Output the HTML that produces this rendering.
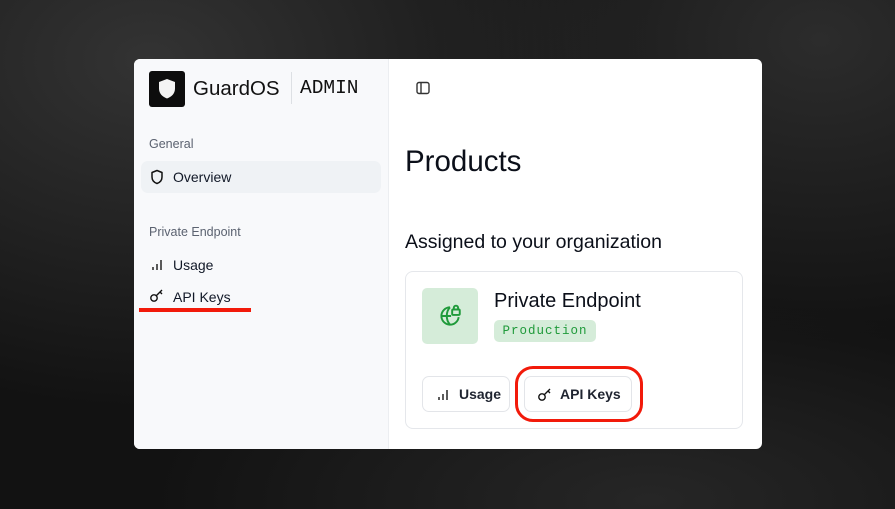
<!DOCTYPE html>
<html><head><style>
*{box-sizing:border-box;margin:0;padding:0}
body{width:895px;height:509px;overflow:hidden;font-family:"Liberation Sans",sans-serif;
background:radial-gradient(ellipse 500px 350px at 150px 60px,#333,transparent),radial-gradient(ellipse 400px 300px at 820px 40px,#2c2c2c,transparent),radial-gradient(ellipse 500px 200px at 650px 500px,#262626,transparent),#121212;position:relative}
.card{position:absolute;left:134px;top:59px;width:628px;height:390px;background:#fff;border-radius:6px;overflow:hidden}
.side{position:absolute;left:0;top:0;width:255px;height:390px;background:#f8f9fb;border-right:1px solid #eceef1}
.logo{position:absolute;left:15px;top:12px;width:36px;height:36px;background:#0d0d0d;border-radius:3px}
.abs{position:absolute;white-space:nowrap}
.lbl{font-size:12.5px;color:#5b6270}
.item{font-size:14px;color:#111827}
.btn{position:absolute;top:317px;height:36px;border:1px solid #e3e5e9;border-radius:7px;background:#fff;font-size:14px;font-weight:bold;color:#1f2430}
</style></head><body>
<div class="card">
 <div class="side">
  <div class="logo"><svg width="36" height="36" viewBox="0 0 36 36"><path d="M18 8l8 3v6.5c0 5-3.3 8.3-8 10-4.7-1.7-8-5-8-10V11z" fill="#f4f4f4"/></svg></div>
  <div class="abs" style="left:59px;top:18px;font-size:20.5px;color:#111">GuardOS</div>
  <div class="abs" style="left:157px;top:13px;width:1px;height:32px;background:#dde0e4"></div>
  <div class="abs" style="left:166px;top:18px;font-size:19.5px;font-family:'Liberation Mono',monospace;color:#111">ADMIN</div>
  <div class="abs lbl" style="left:15px;top:78px">General</div>
  <div class="abs" style="left:7px;top:102px;width:240px;height:32px;background:#eff2f5;border-radius:7px"></div>
  <svg class="abs" style="left:16px;top:110px" width="14" height="16" viewBox="0 0 14 16"><path d="M7 1.5l5 2v4.5c0 3.3-2.2 5.5-5 6.5-2.8-1-5-3.2-5-6.5V3.5z" fill="none" stroke="#111" stroke-width="1.5" stroke-linejoin="round"/></svg>
  <div class="abs item" style="left:39px;top:110px">Overview</div>
  <div class="abs lbl" style="left:15px;top:166px">Private Endpoint</div>
  <svg class="abs" style="left:17px;top:200px" width="12" height="12"><path d="M2 11V8M6 11V5M10 11V1" stroke="#333" stroke-width="1.6"/></svg>
  <div class="abs item" style="left:39px;top:198px">Usage</div>
  <svg class="abs" style="left:15px;top:230px" width="16" height="14" viewBox="0 0 16 14"><circle cx="5" cy="9" r="3.2" fill="none" stroke="#111" stroke-width="1.4"/><path d="M7.5 6.5L13 1M11 3l2 2" stroke="#111" stroke-width="1.4" fill="none"/></svg>
  <div class="abs item" style="left:39px;top:230px">API Keys</div>
  <div class="abs" style="left:5px;top:249px;width:112px;height:4px;background:#f21a0a"></div>
 </div>
 <svg class="abs" style="left:282px;top:22px" width="14" height="14"><rect x="1" y="1.5" width="12" height="11" rx="2" fill="none" stroke="#333" stroke-width="1.4"/><path d="M5 2v10" stroke="#333" stroke-width="1.4"/></svg>
 <div class="abs" style="left:271px;top:86px;font-size:29.5px;color:#0b0f19">Products</div>
 <div class="abs" style="left:271px;top:172px;font-size:19.5px;color:#0b0f19">Assigned to your organization</div>
 <div class="abs" style="left:271px;top:212px;width:338px;height:158px;border:1px solid #e5e7eb;border-radius:8px"></div>
 <div class="abs" style="left:288px;top:229px;width:56px;height:56px;background:#d5ecd9;border-radius:5px"></div>
 <svg class="abs" style="left:303px;top:244px" width="26" height="26" viewBox="0 0 24 24" fill="none" stroke="#1f9a3a" stroke-width="1.8"><path d="M20 13a8 8 0 1 1-8-9"/><path d="M4 12h9M12 4c-2.5 2.5-3 5-3 8s.8 5.5 3 8"/><rect x="14" y="6" width="7" height="5" rx="1"/><path d="M15.5 6V4.5a2 2 0 0 1 4 0V6"/></svg>
 <div class="abs" style="left:360px;top:231px;font-size:20px;color:#0b0f19">Private Endpoint</div>
 <div class="abs" style="left:360px;top:261px;width:102px;height:22px;background:#d5ecd9;border-radius:5px;font-family:'Liberation Mono',monospace;font-size:12.5px;color:#1f9a3a;text-align:center;line-height:22px;letter-spacing:1px">Production</div>
 <div class="btn" style="left:288px;width:88px"><svg class="abs" style="left:14px;top:12px" width="12" height="12"><path d="M2 11V8M6 11V5M10 11V1" stroke="#333" stroke-width="1.6"/></svg><span class="abs" style="left:36px;top:9px">Usage</span></div>
 <div class="btn" style="left:390px;width:108px"><svg class="abs" style="left:12px;top:11px" width="16" height="14" viewBox="0 0 16 14"><circle cx="5" cy="9" r="3.2" fill="none" stroke="#111" stroke-width="1.4"/><path d="M7.5 6.5L13 1M11 3l2 2" stroke="#111" stroke-width="1.4" fill="none"/></svg><span class="abs" style="left:35px;top:9px">API Keys</span></div>
 <div class="abs" style="left:381px;top:307px;width:128px;height:56px;border:3.5px solid #f21a0a;border-radius:18px"></div>
</div>
</body></html>
